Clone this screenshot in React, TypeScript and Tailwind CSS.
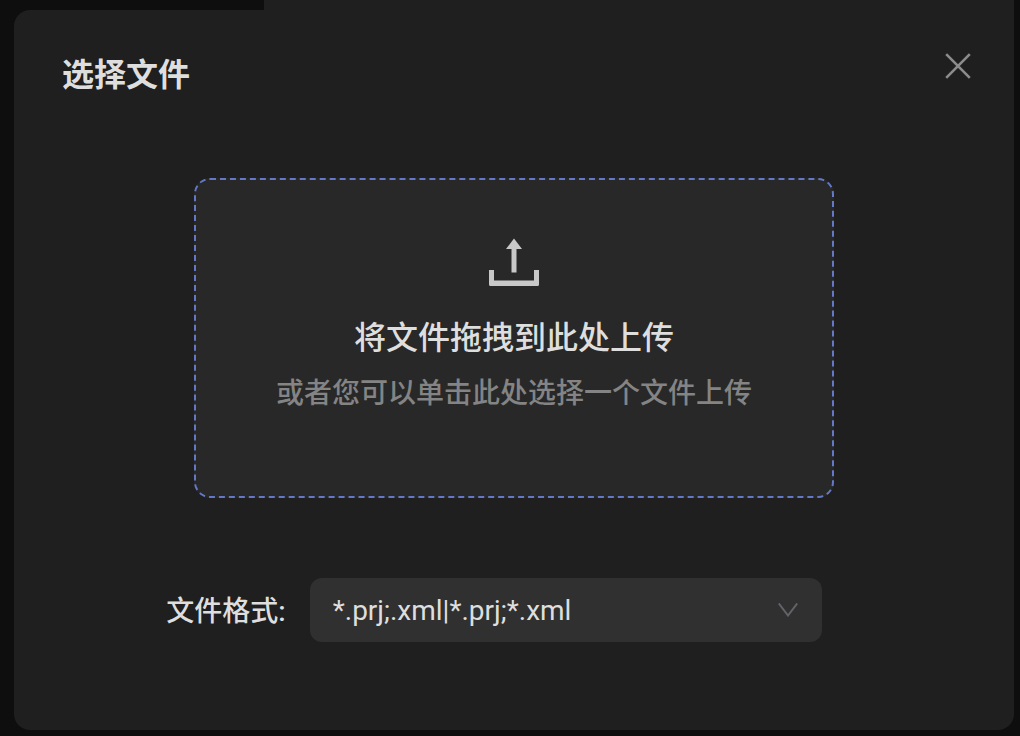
function CloseIcon() {
  return (
    <svg viewBox="0 0 28 28" className="size-7" fill="none" stroke="currentColor" strokeWidth="2.6" aria-hidden="true">
      <path d="M2.200 2.200L25.800 25.800M25.800 2.200L2.200 25.800" />
    </svg>
  );
}

function UploadIcon() {
  return (
    <svg viewBox="0 0 50 48" className="h-12 w-[50px]" fill="currentColor" aria-hidden="true">
      <path d="M25 0.500L33 11H27.500V34.500H22.500V11H17Z" />
      <path d="M0 32H5V42.500H45V32H50V46.500Q50 48 48.500 48H1.500Q0 48 0 46.500Z" />
    </svg>
  );
}

function ChevronIcon() {
  return (
    <svg viewBox="0 0 20 14" className="h-3.5 w-5" fill="none" stroke="currentColor" strokeWidth="2" aria-hidden="true">
      <path d="M0.800 0.500L10 12.500L19.200 0.500" />
    </svg>
  );
}

export default function App() {
  return (
    <div className="flex min-h-screen flex-col bg-[#0e0e0e] pr-1.5 pb-1.5 pl-3.5 font-[Roboto,'Noto_Sans_CJK_SC',sans-serif] text-[#dedede]">
      <div className="ml-[250px] h-2.5 bg-[#1f1f1f]" />
      <section
        role="dialog"
        aria-labelledby="dialog-title"
        className="flex grow flex-col rounded-2xl rounded-tr-none bg-[#1f1f1f] pb-[88px]"
      >
        <header className="flex items-start justify-between px-12 pt-10">
          <h1 id="dialog-title" className="text-[32px] leading-[50px] font-bold">选择文件</h1>
          <button type="button" aria-label="关闭" className="-mr-1.5 mt-0.5 text-[#8c8c8c]">
            <CloseIcon />
          </button>
        </header>

        <label
          htmlFor="upload"
          className="mx-auto mt-[78px] flex h-80 w-full max-w-[640px] cursor-pointer flex-col items-center rounded-2xl border-2 border-dashed border-[#6478c8] bg-[#282828] pt-[58px]"
        >
          <span className="text-[#c8c8c8]">
            <UploadIcon />
          </span>
          <span className="mt-7 text-[32px] leading-12 font-medium">将文件拖拽到此处上传</span>
          <span className="mt-2.5 text-[28px] leading-11 font-medium text-[#848484]">或者您可以单击此处选择一个文件上传</span>
          <input id="upload" type="file" className="sr-only" />
        </label>

        <div className="mt-20 flex items-center justify-center gap-6 pr-10 text-[28px]">
          <label htmlFor="format" className="pt-1 leading-11 font-medium">文件格式:</label>
          <div className="grid w-full max-w-[512px] items-center">
            <select
              id="format"
              className="col-start-1 row-start-1 h-16 w-full appearance-none rounded-xl bg-[#303030] pt-0.5 pr-16 pl-[23px]"
            >
              <option>*.prj;.xml|*.prj;*.xml</option>
            </select>
            <span className="pointer-events-none col-start-1 row-start-1 mr-6 justify-self-end text-[#626269]">
              <ChevronIcon />
            </span>
          </div>
        </div>
      </section>
    </div>
  );
}
